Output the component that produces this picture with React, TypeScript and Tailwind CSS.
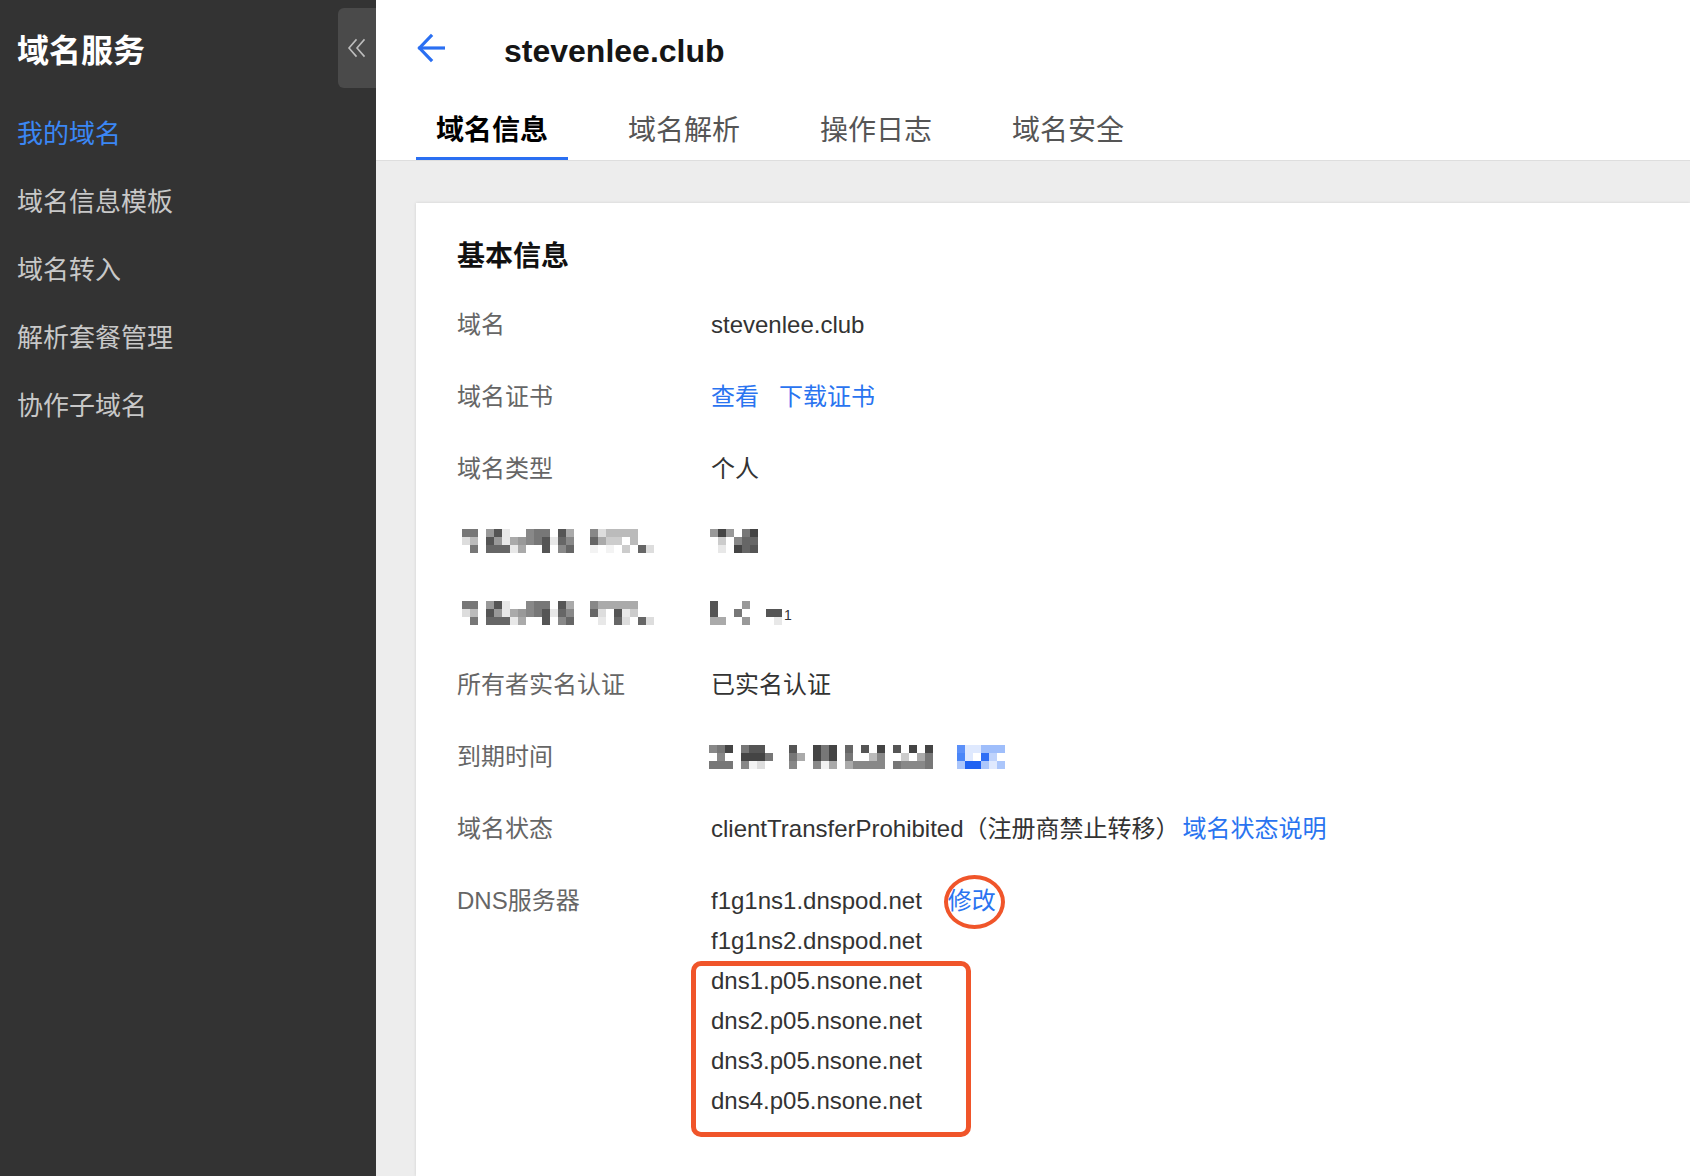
import React from 'react';

const GRAY: Record<string, string> = {
  '9': '#444444',
  '8': '#555555',
  '7': '#666666',
  '6': '#777777',
  '5': '#888888',
  '4': '#999999',
  '3': '#aaaaaa',
  '2': '#bbbbbb',
  '1': '#cccccc',
  d: '#dddddd',
  e: '#e8e8e8',
  f: '#f3f3f3',
};

const BLUE: Record<string, string> = {
  '9': '#1f62f2',
  '8': '#2f6ff5',
  '7': '#4a86f8',
  '6': '#5b90f9',
  '4': '#9fbefb',
  '3': '#abc6fb',
  '2': '#bfd3fc',
  d: '#dfe9fe',
};

function Pixels({ rows, palette }: { rows: string[]; palette: Record<string, string> }) {
  return (
    <div className="flex flex-col">
      {rows.map((r, i) => (
        <div key={i} className="flex">
          {r.split('').map((c, j) => (
            <div
              key={j}
              className="w-[8px] h-[8px]"
              style={{ backgroundColor: palette[c] ?? 'transparent' }}
            />
          ))}
        </div>
      ))}
    </div>
  );
}

const label1 = ['66.48e..566.83..5d2222..', 'd2.84e34568e75..7311.2..', '.6.777e3..8.57..f.f.1.7d'];
const label2 = ['66.48e..566.83..533333..', 'd2.84e34568e75..7d.8e1..', '.6.777e3..8.57...e.7d.7d'];
const value1 = ['494.69', '.1.577', '.e.978'];
const value2 = ['8...4.....', '8..6...88.', '33..4...e.'];
const expiryGray = [
  '569.688...8..969.7.8.9.8.9.9',
  '.5..9996..63.969.6..25..1.36',
  '666.5fd...5..5f3.35555.65556',
];
const expiryBlue = ['6dd444', '7d.82.', '3993d3'];

const menu = ['我的域名', '域名信息模板', '域名转入', '解析套餐管理', '协作子域名'];
const tabs = ['域名信息', '域名解析', '操作日志', '域名安全'];

function Row({ label, children }: { label: React.ReactNode; children: React.ReactNode }) {
  return (
    <div className="flex items-start py-4">
      <div className="w-[254px] shrink-0 leading-[40px] h-[40px] flex items-center text-[#666666]">{label}</div>
      <div className="flex-1 text-[#333333]">{children}</div>
    </div>
  );
}

export default function App() {
  return (
    <div className="flex h-screen w-full overflow-hidden font-['Liberation_Sans','Noto_Sans_CJK_SC',sans-serif]">
      {/* Sidebar */}
      <aside className="relative w-[376px] shrink-0 bg-[#333333] h-full">
        <div className="h-[100px] pt-[31px] pl-[17px]">
          <div className="text-[32px] leading-[40px] font-bold text-white">域名服务</div>
        </div>
        <nav className="flex flex-col">
          {menu.map((m, i) => (
            <div
              key={m}
              className={
                'h-[68px] flex items-center pl-[17px] text-[26px] ' +
                (i === 0 ? 'text-[#3b87f5]' : 'text-[#c8c8c8]')
              }
            >
              {m}
            </div>
          ))}
        </nav>
        <div className="absolute right-0 top-[8px] w-[38px] h-[80px] bg-[#4a4a4a] rounded-l-[6px] flex items-center justify-center">
          <svg width="20" height="20" viewBox="0 0 20 20" fill="none" stroke="#bdbdbd" strokeWidth="1.6" strokeLinecap="square">
            <path d="M9 2 L2 10 L9 18" />
            <path d="M17 2 L10 10 L17 18" />
          </svg>
        </div>
      </aside>

      {/* Main */}
      <main className="flex-1 flex flex-col bg-[#ededed] min-w-0">
        <header className="h-[161px] bg-white border-b border-[#dedede] flex flex-col">
          <div className="h-[96px] flex items-center pl-[41px]">
            <svg width="28" height="30" viewBox="0 0 28 30" fill="none" stroke="#2a6ff2" strokeWidth="3.2" strokeLinecap="square" strokeLinejoin="miter">
              <path d="M14 3 L2.5 15 L14 27" />
              <path d="M3 15 H27" />
            </svg>
            <div className="ml-[59px] text-[32px] font-bold text-[#151515] leading-[40px] pt-[6px]">stevenlee.club</div>
          </div>
          <div className="h-[64px] flex pl-[40px] gap-[40px]">
            {tabs.map((t, i) => (
              <div
                key={t}
                className={
                  'h-[64px] px-[20px] pt-[8px] flex items-center text-[28px] border-b-[3px] ' +
                  (i === 0
                    ? 'border-[#2a6ff2] text-black font-bold'
                    : 'border-transparent text-[#555555]')
                }
              >
                {t}
              </div>
            ))}
          </div>
        </header>

        <div className="flex-1 pl-[40px] pt-[42px] flex">
          <section className="flex-1 bg-white shadow-[0_0_3px_rgba(0,0,0,0.12)] pl-[41px] pt-[34px] text-[24px]">
            <div className="text-[28px] leading-[40px] font-bold text-[#111111]">基本信息</div>
            <div className="mt-[12px] flex flex-col">
              <Row label="域名">
                <div className="leading-[40px]">stevenlee.club</div>
              </Row>
              <Row label="域名证书">
                <div className="leading-[40px] text-[#2a74f0]">
                  <span>查看</span>
                  <span className="ml-[20px]">下载证书</span>
                </div>
              </Row>
              <Row label="域名类型">
                <div className="leading-[40px]">个人</div>
              </Row>
              <Row label={<div className="ml-[5px]"><Pixels rows={label1} palette={GRAY} /></div>}>
                <div className="h-[40px] flex items-center -ml-[1px]">
                  <Pixels rows={value1} palette={GRAY} />
                </div>
              </Row>
              <Row label={<div className="ml-[5px]"><Pixels rows={label2} palette={GRAY} /></div>}>
                <div className="h-[40px] flex items-center -ml-[1px]">
                  <Pixels rows={value2} palette={GRAY} />
                  <span className="text-[14px] text-[#333] -ml-[6px] mt-[4px]">1</span>
                </div>
              </Row>
              <Row label="所有者实名认证">
                <div className="leading-[40px]">已实名认证</div>
              </Row>
              <Row label="到期时间">
                <div className="h-[40px] flex items-center -ml-[2px]">
                  <Pixels rows={expiryGray} palette={GRAY} />
                  <div className="w-[24px]" />
                  <Pixels rows={expiryBlue} palette={BLUE} />
                </div>
              </Row>
              <Row label="域名状态">
                <div className="leading-[40px] whitespace-nowrap">
                  <span>clientTransferProhibited（注册商禁止转移）</span>
                  <span className="ml-[3px] text-[#2a74f0]">域名状态说明</span>
                </div>
              </Row>
              <Row label="DNS服务器">
                <div className="flex flex-col">
                  <div className="leading-[40px] whitespace-nowrap">
                    <span>f1g1ns1.dnspod.net</span>
                    <span className="relative ml-[26px] text-[#2a74f0]">
                      修改
                      <span className="absolute left-[-4px] top-[-12px] w-[61px] h-[54px] rounded-[50%] border-[4px] border-[#f0552a]" />
                    </span>
                  </div>
                  <div className="leading-[40px]">f1g1ns2.dnspod.net</div>
                  <div className="relative">
                    <div className="leading-[40px]">dns1.p05.nsone.net</div>
                    <div className="leading-[40px]">dns2.p05.nsone.net</div>
                    <div className="leading-[40px]">dns3.p05.nsone.net</div>
                    <div className="leading-[40px]">dns4.p05.nsone.net</div>
                    <div className="absolute left-[-20px] top-0 w-[280px] h-[176px] rounded-[10px] border-[5px] border-[#f0552a]" />
                  </div>
                </div>
              </Row>
            </div>
          </section>
        </div>
      </main>
    </div>
  );
}
